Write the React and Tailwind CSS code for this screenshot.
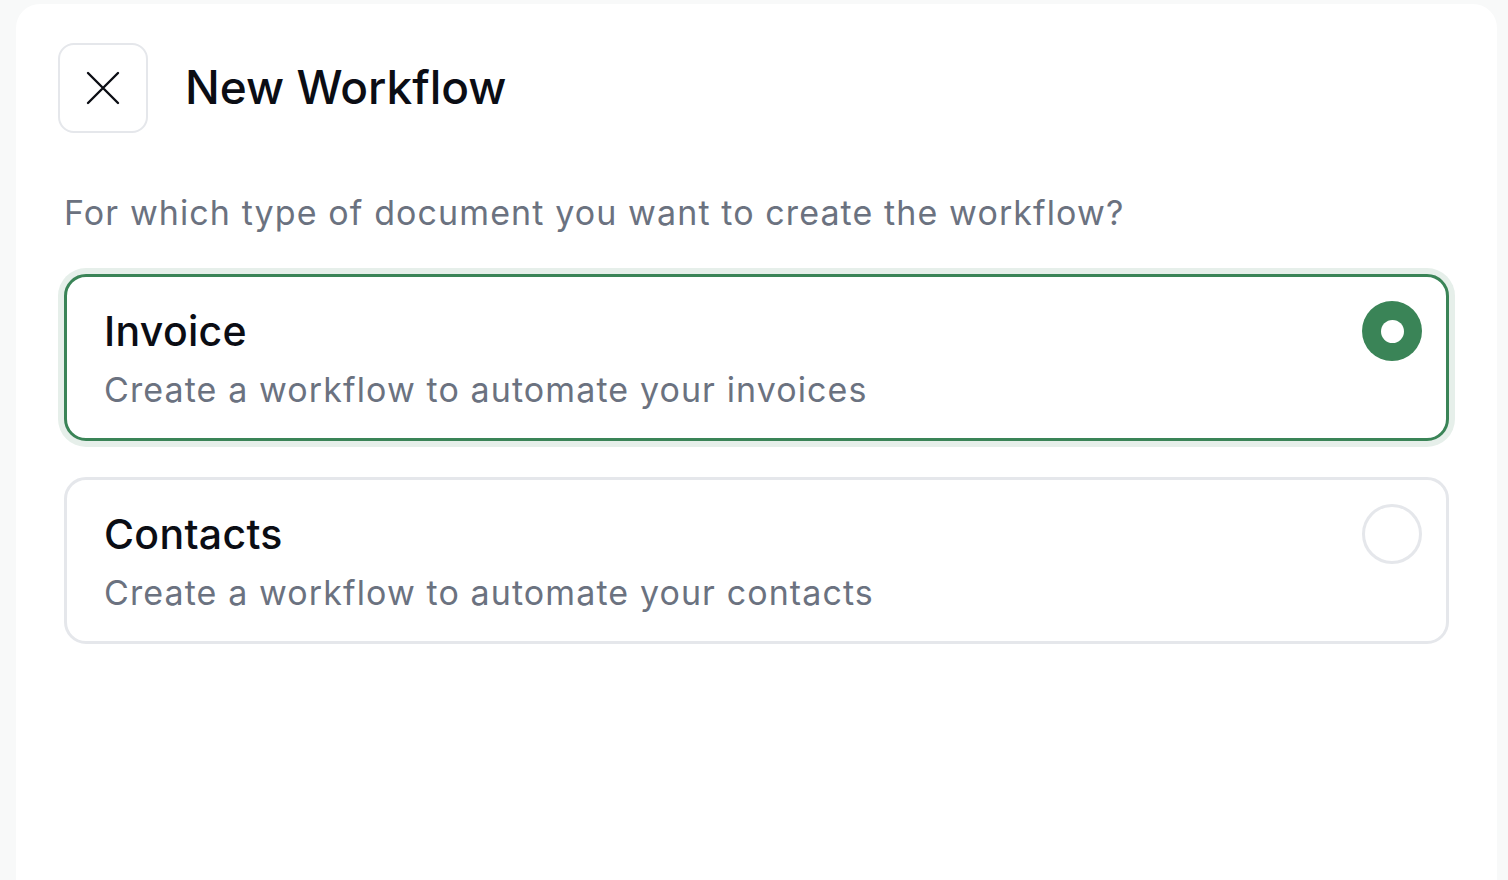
import React from "react";

function Option({ title, desc, selected }) {
  return (
    <div
      className={
        "flex items-start justify-between rounded-[22px] border-[3px] bg-white pl-[37px] pr-[24px] pt-[26px] pb-[24px] " +
        (selected
          ? "border-[#3a8457] shadow-[0_0_0_6px_#e6efea]"
          : "border-[#e5e7eb]")
      }
    >
      <div className="flex flex-col">
        <div className="text-[41px] leading-[56px] font-medium text-[#0b0d14] tracking-[0.3px]">{title}</div>
        <div className="mt-[7px] text-[34px] leading-[48px] text-[#6b7280] tracking-[1.1px]">{desc}</div>
      </div>
      <div className="-mt-[2px]">
        {selected ? (
          <div className="flex h-[60px] w-[60px] items-center justify-center rounded-full bg-[#3a8457]">
            <div className="h-[23px] w-[23px] rounded-full bg-white" />
          </div>
        ) : (
          <div className="h-[60px] w-[60px] rounded-full border-[3px] border-[#e5e7eb]" />
        )}
      </div>
    </div>
  );
}

export default function App() {
  return (
    <div
      className="h-[880px] w-[1508px] overflow-hidden bg-[#f8f9f9] pl-[16px] pr-[11px] pt-[4px]"
      style={{ fontFamily: "Inter, 'Noto Sans', sans-serif" }}
    >
      <div className="h-full rounded-t-[24px] bg-white px-[48px] pt-[39px]">
        <div className="flex items-center gap-[37px]">
          <button className="-ml-[6px] flex h-[90px] w-[90px] items-center justify-center rounded-[16px] border-2 border-[#e5e7eb] bg-white">
            <svg width="34" height="34" viewBox="0 0 34 34" fill="none" stroke="#0b0d14" strokeWidth="2.4" strokeLinecap="round">
              <path d="M2 2 L32 32 M32 2 L2 32" />
            </svg>
          </button>
          <h1 className="-mt-[3px] text-[46px] font-medium leading-none text-[#0b0d14]">New Workflow</h1>
        </div>
        <p className="mt-[60px] text-[34px] leading-[40px] text-[#6b7280] tracking-[1.1px]">
          For which type of document you want to create the workflow?
        </p>
        <div className="mt-[41px] flex flex-col gap-[36px]">
          <Option title="Invoice" desc="Create a workflow to automate your invoices" selected />
          <Option title="Contacts" desc="Create a workflow to automate your contacts" />
        </div>
      </div>
    </div>
  );
}
